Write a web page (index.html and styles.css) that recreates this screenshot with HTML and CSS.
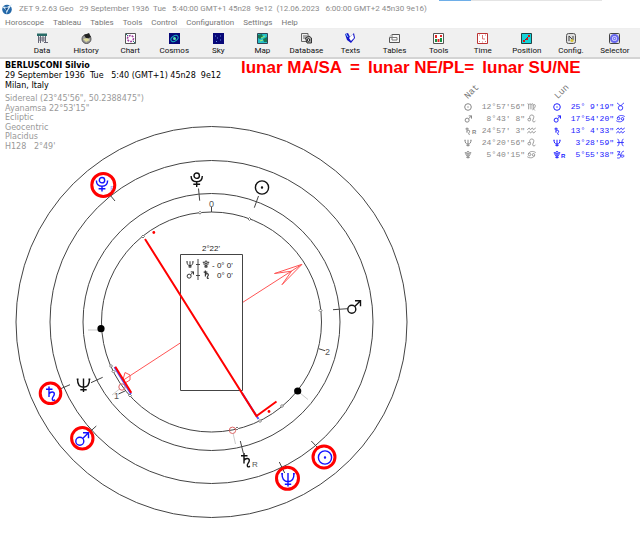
FILE: index.html
```html
<!DOCTYPE html>
<html lang="en">
<head>
<meta charset="utf-8">
<title>ZET 9.2.63 Geo</title>
<link rel="stylesheet" href="styles.css">
</head>
<body>
<svg class="defs" aria-hidden="true">
  <symbol id="sun" viewBox="0 0 16 16"><circle cx="8" cy="8" r="6.6"/><circle cx="8" cy="8" r=".5" fill="currentColor"/></symbol>
  <symbol id="mars" viewBox="0 0 16 16"><circle cx="6.3" cy="10.3" r="4"/><path d="M9.2 7.4 15 1.8M9.5 1.8H15V7.2"/></symbol>
  <symbol id="saturn" viewBox="0 0 16 16"><path d="M3 3.8H9.5M6 1V11.5M6 8.5C7.5 5.8 11.3 6 11.3 8.5C11.3 11 8.8 11.5 9.3 13.8C9.6 15.2 11 15.2 11.8 14"/></symbol>
  <symbol id="neptune" viewBox="0 0 16 16"><path d="M2 2C2 7.5 4 10.2 8 10.2S14 7.5 14 2M8 1.5V15M4.8 12.7H11.2M1.2 2.3H3M13 2.3H14.8"/></symbol>
  <symbol id="pluto" viewBox="0 0 16 16"><circle cx="8" cy="4.2" r="2.7"/><path d="M2.4 4.4C2.4 8 4.6 10.2 8 10.2S13.6 8 13.6 4.4M8 10V15.4M4.6 12.7H11.4"/></symbol>
  <symbol id="pluto-alt" viewBox="0 0 16 16"><circle cx="8" cy="3.5" r="2.5"/><path d="M1.5 3.5H4V6C4 9 5.5 10.2 8 10.2S12 9 12 6V3.5H14.5M8 6V15M4.5 12.6H11.5"/></symbol>
  <symbol id="virgo" viewBox="0 0 16 16"><path d="M1 3 3 4V13M3 5C5 2 7 3 7 5V13M7 5C9 2 11 3 11 5V12L14 15M11 6C13 3 15.5 5 14.5 8C14 10 12 12 9.5 14"/></symbol>
  <symbol id="leo" viewBox="0 0 16 16"><circle cx="4" cy="10" r="2.4"/><path d="M6 8.5C3 4 6 1.5 9 1.8C13 2.3 12.5 6 11 9C9.5 12 10 14 12 14S14.5 13 15 12"/></symbol>
  <symbol id="aquarius" viewBox="0 0 16 16"><path d="M.5 6.5 4 3.5 6 6.5 9.5 3.5 11.5 6.5 15.5 3.5M.5 12.5 4 9.5 6 12.5 9.5 9.5 11.5 12.5 15.5 9.5"/></symbol>
  <symbol id="cancer" viewBox="0 0 16 16"><circle cx="4.5" cy="8" r="2.2"/><circle cx="11.5" cy="8.5" r="2.2"/><path d="M2.3 7C4 2 11 1.5 15.5 4.5M13.7 9.5C12 14.5 5 15 .5 12"/></symbol>
  <symbol id="taurus" viewBox="0 0 16 16"><circle cx="8" cy="10.5" r="4"/><path d="M2 2C5 2 4.5 6.5 8 6.5S11 2 14 2"/></symbol>
  <symbol id="pisces" viewBox="0 0 16 16"><path d="M3 1.5C6.5 5 6.5 11 3 14.5M13 1.5C9.5 5 9.5 11 13 14.5M2 8H14"/></symbol>
  <symbol id="capricorn" viewBox="0 0 16 16"><path d="M2 3H7L3 9.5C6 7 9 8 8.5 11S5 15 2 14M8.5 10C9 5 11 2.5 14 2M9 11C11 8 14.5 8.5 14 11S10 13.5 8.5 11"/></symbol>
</svg>

<div class="tabstrip"><span class="tab-on"></span><span class="tab-off"></span></div>
<header class="titlebar">
  <svg class="logo" viewBox="0 0 12 12" aria-hidden="true"><circle cx="6" cy="6.5" r="4.8" fill="#2468a8"/><path d="M.8 3.500 6 4 11.500.8 7 7.500 5.500 11 5 7z" fill="#d9ecfa"/><path d="M4 4.800 7.500 4.500 5.500 8z" fill="#174c86"/></svg>
  <span class="title">ZET 9.2.63 Geo   29 September 1936  Tue   5:40:00 GMT+1 45n28  9e12  (12.06.2023   6:00:00 GMT+2 45n30 9e16)</span>
</header>
<nav class="menubar">
  <button>Horoscope</button><button>Tableau</button><button>Tables</button><button>Tools</button><button>Control</button><button>Configuration</button><button>Settings</button><button>Help</button>
</nav>
<div class="toolbar">
  <button><svg viewBox="0 0 11 11"><path d="M0 .5H10V3H0z" fill="#286b67"/><path d="M1.500 3V10M3.500 3V10M6 3V9M8.500 3V9M1 5H9M1 7H9M7 9.500H11" stroke="#667" fill="none"/></svg>Data</button>
  <button><svg viewBox="0 0 11 11"><circle cx="5.5" cy="6" r="4.5" fill="#999" stroke="#555"/><path d="M3 2 8 0 10 4 5.500 6z" fill="#222"/><path d="M2 6 6 5 9 7 5 9z" fill="#dedb9b"/></svg>History</button>
  <button><svg viewBox="0 0 11 11"><path d="M.5.500H10.500V10.500H.500z" fill="#fff" stroke="#555"/><circle cx="5.5" cy="5.5" r="3" fill="#fff" stroke="#a13fa1" stroke-width="1.5" stroke-dasharray="2 1"/><path d="M1 1 3 3M10 10 8 8" stroke="#287878"/></svg>Chart</button>
  <button><svg viewBox="0 0 11 11"><path d="M0 0H11V11H0z" fill="#080878"/><ellipse cx="5.5" cy="5.5" rx="4" ry="2.5" fill="none" stroke="#16afbd" transform="rotate(-35 5.5 5.5)"/><circle cx="5.5" cy="5.5" r="1.5" fill="#5fe6b0"/></svg>Cosmos</button>
  <button><svg viewBox="0 0 11 11"><path d="M0 0H11V11H0z" fill="#080878"/><path d="M3 8.500h1M4 5h1M7 3h1M7 7h1M2 3h1" stroke="#668ddc"/></svg>Sky</button>
  <button><svg viewBox="0 0 11 11"><path d="M.5.500H10.500V10.500H.500z" fill="#25bfc9" stroke="#345"/><path d="M1 2 5 1 6 4 3 6 1 5zM6 6 10 4V9L7 9z" fill="#167755"/><path d="M4 5 8 3M3 8 6 7" stroke="#9df06e"/></svg>Map</button>
  <button><svg viewBox="0 0 11 11"><path d="M.5.500H7V8.500H.500z" fill="#eee" stroke="#666"/><path d="M2 3H6M2 5H5" stroke="#666"/><path d="M4.500 5 8 3 10.500 5V10H6z" fill="#aaa" stroke="#333"/><circle cx="7.5" cy="7" r="1.3" fill="#fff" stroke="#222"/></svg>Database</button>
  <button><svg viewBox="0 0 11 11"><path d="M0 1 3 0 5 4 9 0 10 5 6 10 2 7z" fill="#1515c9"/><path d="M4 5 8 1 9 5 6 8z" fill="#fff"/><path d="M1 1 3 4" stroke="#8df"/></svg>Texts</button>
  <button><svg viewBox="0 0 11 11"><path d="M.5 4.500 3 1.500H10.500V9.500H.500z" fill="#f5f5f5" stroke="#555"/><path d="M3 4.500H8V7H3zM3 1.500V4.500H.500" fill="#fff" stroke="#777"/></svg>Tables</button>
  <button><svg viewBox="0 0 11 11"><path d="M.5.500H10.500V10.500H.500z" fill="#fff" stroke="#555"/><path d="M3 2V5M5.500 6V9M8 2V4" stroke="#e02828" stroke-width="2"/><path d="M3 6V9M8 5V9" stroke="#179142" stroke-width="2"/></svg>Tools</button>
  <button><svg viewBox="0 0 11 11"><path d="M.5.500H10.500V10.500H.500z" fill="#fff" stroke="#b33"/><path d="M5.500 2V6H8M2 2h1M8 2h1M2 8.500h1M8 8.500h1M5 9h1" fill="none" stroke="#d77"/></svg>Time</button>
  <button><svg viewBox="0 0 11 11"><path d="M.5.500H10.500V10.500H.500z" fill="#16d3d9" stroke="#244"/><path d="M3 8 8 3" stroke="#344"/><path d="M2 7H4V9H2zM7 2H9V4H7zM5 5H7V7H5z" fill="#d11"/></svg>Position</button>
  <button><svg viewBox="0 0 11 11"><rect x="1.5" y=".5" width="9" height="10" rx="2" fill="#ddd" stroke="#555"/><path d="M4 8V3L8 7V3" fill="none" stroke="#444"/><circle cx="7" cy="7.5" r="1.5" fill="#d8c532"/></svg>Config.</button>
  <button><svg viewBox="0 0 11 11"><rect x=".5" y=".5" width="10" height="10" rx="1" fill="#ddd" stroke="#444"/><circle cx="5.5" cy="5.5" r="3.5" fill="#dcdcff" stroke="#6666ed" stroke-width="2"/><circle cx="5.5" cy="5.5" r="1.2" fill="none" stroke="#55e"/></svg>Selector</button>
</div>

<main class="workspace">
  <section class="info">
    <div class="person">
      <strong>BERLUSCONI Silvio</strong>
      <span>29 September 1936  Tue   5:40 (GMT+1) 45n28  9e12</span>
      <span>Milan, Italy</span>
    </div>
    <div class="settings">
      <span>Sidereal (23°45'56", 50.2388475")</span>
      <span>Ayanamsa 22°53'15"</span>
      <span>Ecliptic</span>
      <span>Geocentric</span>
      <span>Placidus</span>
      <span>H128   2°49'</span>
    </div>
  </section>

  <section class="side">
    <h1 class="formula"><span>lunar MA/SA</span><span>=</span><span>lunar NE/PL=</span><span>lunar SU/NE</span></h1>
    <table class="positions">
      <thead><tr><th colspan="3"><span class="tilt">Nat</span></th><th colspan="3"><span class="tilt">Lun</span></th></tr></thead>
      <tbody>
        <tr><td class="body"><svg><use href="#sun"/></svg></td><td class="deg">12°57'56"</td><td class="sign"><svg><use href="#virgo"/></svg></td>
            <td class="body lun"><svg><use href="#sun"/></svg></td><td class="deg lun">25° 9'19"</td><td class="sign lun"><svg><use href="#taurus"/></svg></td></tr>
        <tr><td class="body"><svg><use href="#mars"/></svg></td><td class="deg">8°43' 8"</td><td class="sign"><svg><use href="#leo"/></svg></td>
            <td class="body lun"><svg><use href="#mars"/></svg></td><td class="deg lun">17°54'20"</td><td class="sign lun"><svg><use href="#cancer"/></svg></td></tr>
        <tr><td class="body"><svg><use href="#saturn"/></svg><sub>R</sub></td><td class="deg">24°57' 3"</td><td class="sign"><svg><use href="#aquarius"/></svg></td>
            <td class="body lun"><svg><use href="#saturn"/></svg></td><td class="deg lun">13° 4'33"</td><td class="sign lun"><svg><use href="#aquarius"/></svg></td></tr>
        <tr><td class="body"><svg><use href="#neptune"/></svg></td><td class="deg">24°20'56"</td><td class="sign"><svg><use href="#leo"/></svg></td>
            <td class="body lun"><svg><use href="#neptune"/></svg></td><td class="deg lun">3°28'59"</td><td class="sign lun"><svg><use href="#pisces"/></svg></td></tr>
        <tr><td class="body"><svg><use href="#pluto-alt"/></svg></td><td class="deg">5°40'15"</td><td class="sign"><svg><use href="#cancer"/></svg></td>
            <td class="body lun"><svg><use href="#pluto-alt"/></svg><sub>R</sub></td><td class="deg lun">5°55'38"</td><td class="sign lun"><svg><use href="#capricorn"/></svg></td></tr>
      </tbody>
    </table>
  </section>

  <svg class="chart" viewBox="12 122 400 400" role="img" aria-label="Astrological chart">
    <g class="ring"><circle cx="211.5" cy="322" r="195.5"/><circle cx="211.5" cy="322" r="161.5"/><circle cx="211.5" cy="322" r="128.5"/><circle cx="211.5" cy="322" r="110"/></g>
    <g class="faint"><path d="M88 330H98M300 393 308 399.500M233 433 235.500 444M119.500 389 112 395"/></g>
    <g class="tick"><path d="M198.500 188.500 199.700 200.700M258.500 196 254.300 207.700M333 309.700 347.500 308.700M211.500 207V212M318.700 348.700 325 350.700M118.500 394 125 391M240.300 441 243.300 453M279.300 462 284.700 473M311.300 441 317 447M110 195 115 201M91 382.700 102.700 377.300M60 389 70 384.700M90 431.700 96.300 426"/></g>
    <g class="node">
      <path d="M200 211.200l1.500 1.500-1.500 1.500-1.500-1.500zM249.500 217.500l1.500 1.500-1.500 1.500-1.500-1.500zM143 235l1.500 1.500-1.500 1.500-1.500-1.500zM320.500 309l1.500 1.500-1.500 1.500-1.500-1.500zM282 404.500l1.500 1.500-1.500 1.500-1.500-1.500zM260 419.500l1.500 1.500-1.500 1.500-1.500-1.500zM237 427l1.500 1.500-1.500 1.500-1.500-1.500zM111 364.500l1.500 1.500-1.500 1.500-1.500-1.500zM113.500 370l1.500 1.500-1.500 1.500-1.500-1.500zM130 394l1.500 1.500-1.500 1.500-1.500-1.500z"/>
    </g>
    <circle cx="101" cy="328.7" r="3.6"/><circle cx="297.7" cy="391" r="3.6"/>
    <g class="marker"><circle cx="232.5" cy="430.3" r="3.2"/><circle cx="122" cy="387" r="3.2"/></g>
    <path class="arrow" d="M122.700 380.500 181 342.500M242.500 302.500 302 264.300M302 264.300 274.500 273.500 291.500 271.200 282 284.700zM122.700 380.700 125 372.500 130 375V380L125.500 382.700z"/>
    <path class="box" d="M180.500 254.500H242.500V390.500H180.500z"/>
    <path class="under" d="M242 393 258.500 419M114.500 367 131 394"/>
    <path class="axis" d="M145 239 257 417M256.500 416 276.500 401.500M115.300 366.700 131.300 392.700"/>
    <g class="dot"><circle cx="153.8" cy="232.5" r="1.4"/><circle cx="269" cy="411.5" r="1.4"/></g>
    <g class="caption">
      <text x="211" y="251" text-anchor="middle">2°22'</text>
      <text x="212" y="268">- 0° 0'</text><text x="217" y="278">0° 0'</text>
    </g>
    <path class="tick" d="M198 259V280M196 264.500H200M196 275.500H200"/>
    <g class="mini">
      <use href="#neptune" x="186" y="260.5" width="8" height="8"/><use href="#pluto-alt" x="202" y="260.5" width="8" height="8"/>
      <use href="#mars" x="186" y="271" width="8" height="8"/><use href="#saturn" x="202" y="270" width="9" height="9"/>
    </g>
    <g class="cusp"><text x="209" y="207">0</text><text x="325" y="355">2</text><text x="114" y="399">1</text></g>
    <g class="planet">
      <use href="#pluto" x="188.7" y="171.5" width="16" height="16"/>
      <use href="#sun" x="254" y="179.5" width="16" height="16"/>
      <use href="#mars" x="345.5" y="299" width="16" height="16"/>
      <use href="#neptune" x="75.5" y="377" width="16" height="16"/>
      <use href="#saturn" x="238" y="452" width="16" height="16"/>
    </g>
    <text class="retro" x="252" y="467">R</text>
    <g class="planet lunar">
      <use href="#pluto" x="94" y="176" width="16" height="16"/>
      <use href="#saturn" x="43" y="385.5" width="16" height="16"/>
      <use href="#mars" x="73.5" y="431" width="16" height="16"/>
      <use href="#neptune" x="280" y="471.5" width="16" height="16"/>
      <use href="#sun" x="317" y="449.5" width="16" height="16"/>
    </g>
    <text class="retro pale" x="110" y="191">R</text>
    <g class="halo"><circle cx="103.3" cy="185" r="11.5"/><circle cx="50.5" cy="393.3" r="10.3"/><circle cx="82.3" cy="438.3" r="10.7"/><circle cx="287.5" cy="478.3" r="11"/><circle cx="324" cy="457" r="11"/></g>
  </svg>
</main>
</body>
</html>
```
FILE: styles.css
```css
body {
  margin: 0;
  background: #fff;
  color: #000;
  font-family: Roboto, sans-serif;
  font-size: 8px;
}
.defs { display: block; width: 0; height: 0; }
symbol { overflow: visible; }

button {
  border: 0;
  padding: 0;
  background: none;
  color: inherit;
  font: inherit;
}

.tabstrip { display: flex; justify-content: flex-end; height: 1px; padding-right: 6%; }
.tab-on { width: 32px; background: #6eaee8; }
.tab-off { width: 131px; background: #e4e4e4; }

.titlebar { display: flex; align-items: center; gap: 6px; height: 15px; color: #8c8c8c; }
.logo { width: 12px; height: 12px; margin-left: 1px; }
.title { white-space: pre; }

.menubar { display: flex; gap: 9px; height: 12px; padding: 0 5px; color: #777; border-bottom: 1px solid #eee; }

.toolbar {
  display: grid;
  grid-template-columns: repeat(14, 1fr);
  height: 28px;
  padding: 0 3px 0 20px;
  background: #f0f0f0;
  border-bottom: 2px solid #d4d4d4;
  color: #111;
}
.toolbar button {
  display: flex;
  flex-direction: column;
  align-items: center;
  gap: 2px;
  padding-top: 4px;
  line-height: 10px;
}
.toolbar svg { width: 11px; height: 11px; }

.workspace { display: grid; grid-template-columns: 236px 1fr; align-items: start; }
.info, .side { grid-row: 1; }
.info {
  grid-column: 1;
  padding: 2px 0 0 5px;
  font-family: "DejaVu Sans", sans-serif;
}
.info span { white-space: pre; }
.side { grid-column: 2; }
.person, .settings { display: grid; grid-auto-rows: 1fr; align-items: center; }
.person { height: 29px; margin-bottom: 4px; line-height: 9px; }
.settings { height: 57px; line-height: 9px; color: #999; }

.formula {
  display: flex;
  gap: 8px;
  margin: 0 0 0 5px;
  font: bold 17px/18px "Liberation Sans", sans-serif;
  color: #f00;
}

.positions {
  margin: 6px 15px 0 auto;
  border-collapse: collapse;
  font: 8px/12px "Liberation Mono", monospace;
  color: #888;
}
.positions td, .positions th { padding: 0; height: 12px; }
.positions th { height: 18px; text-align: left; font-weight: normal; }
.positions svg { width: 8px; height: 8px; overflow: visible; fill: none; stroke: currentColor; stroke-width: 2; vertical-align: middle; }
.positions .sign svg { width: 9px; height: 9px; stroke-width: 1.5; }
.positions .lun { color: #22f; }
.body { width: 17px; white-space: nowrap; }
.positions .body.lun { padding-left: 17px; }
.positions sub { font: bold 6px/6px "Liberation Sans", sans-serif; vertical-align: -1px; }
.deg { width: 44px; text-align: right; white-space: pre; }
.sign { width: 11px; text-align: right; }
.tilt { display: inline-block; transform: rotate(-45deg); font-size: 9px; color: #777; }
.positions th + th { padding-left: 18px; }

.chart { grid-area: 1 / 1 / 2 / 3; width: 400px; height: 400px; margin: 63px 0 0 12px; }
.ring, .tick, .faint, .node, .marker, .arrow, .box, .under, .axis, .halo { fill: none; }
.ring, .tick { stroke: #444; stroke-width: 1; }
.faint { stroke: #ccc; }
.node { fill: #fff; stroke: #777; }
.marker { stroke: #d66; }
.arrow { stroke: #f55; }
.box { stroke: #444; }
.under { stroke: #55f; stroke-width: 2; }
.axis { stroke: #f00; stroke-width: 2; }
.dot { fill: #f00; }
.caption, .cusp, .retro { font-family: "Liberation Sans", sans-serif; font-size: 8px; fill: #222; }
.cusp { fill: #555; font-size: 9px; }
.retro { fill: #555; }
.pale { fill: #99f; }
.mini { fill: none; color: #333; stroke: currentColor; stroke-width: 2; }
.planet { fill: none; color: #111; stroke: currentColor; stroke-width: 1.4; }
.lunar { color: #11f; }
.halo { stroke: #f00; stroke-width: 3; }
```
